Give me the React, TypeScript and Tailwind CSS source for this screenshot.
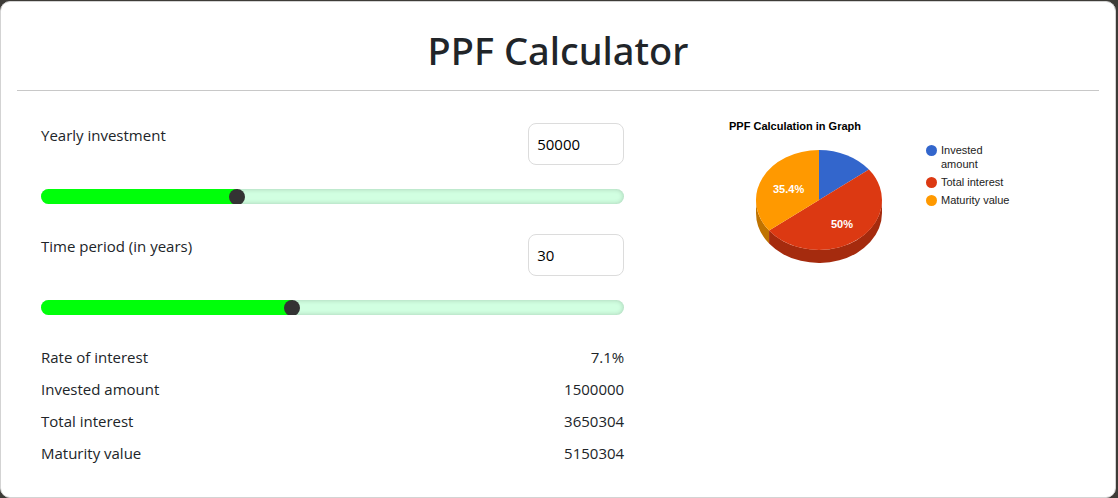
import { useState } from 'react';

interface SliderFieldProps {
  id: string;
  label: string;
  value: number;
  min: number;
  max: number;
  onChange: (value: number) => void;
}

const SliderField = ({ id, label, value, min, max, onChange }: SliderFieldProps) => {
  return (
    <div className="mb-[30px]">
      <div className="mb-6 flex items-start justify-between">
        <label htmlFor={id}>{label}</label>
        <input
          id={id}
          type="text"
          inputMode="numeric"
          className="h-[42px] w-24 rounded-lg border border-[#dcdcdc] bg-white px-2 text-black outline-none"
          value={value}
          onChange={(e) => onChange(Number(e.target.value) || 0)}
        />
      </div>
      <input
        type="range"
        aria-label={label}
        min={min}
        max={max}
        value={value}
        onChange={(e) => onChange(Number(e.target.value))}
        className="block h-[15px] w-full cursor-pointer appearance-none overflow-hidden rounded-full bg-[#d1ffe1] shadow-[inset_0_0_5px_rgba(0,0,0,0.2)] outline-none [&::-webkit-slider-thumb]:size-4 [&::-webkit-slider-thumb]:appearance-none [&::-webkit-slider-thumb]:rounded-full [&::-webkit-slider-thumb]:bg-[#333] [&::-webkit-slider-thumb]:shadow-[-1007px_0_0_1000px_#00ff0a]"
      />
    </div>
  );
};

interface LegendItem {
  lines: string[];
  y: number;
  color: string;
}

const legend: LegendItem[] = [
  { lines: ['Invested', 'amount'], y: 43, color: '#3366cc' },
  { lines: ['Total interest'], y: 75, color: '#dc3912' },
  { lines: ['Maturity value'], y: 93, color: '#ff9900' },
];

const CX = 147;
const CY = 93;
const RX = 63;
const RY = 50;
const DEPTH = 13;

const pointAt = (fraction: number) => {
  const angle = fraction * 2 * Math.PI;
  return { x: CX + RX * Math.sin(angle), y: CY - RY * Math.cos(angle) };
};

// values are in the order blue, red, orange
const PieChart = ({ values }: { values: [number, number, number] }) => {
  const [blue, red, orange] = values;
  const total = blue + red + orange || 1;
  const p0 = pointAt(0);
  const p1 = pointAt(blue / total);
  const p2 = pointAt((blue + red) / total);
  const percent = (n: number) => `${Number(((n / total) * 100).toFixed(1))}%`;

  return (
    <svg viewBox="0 0 400 200" width="400" height="200" className="max-w-full font-['Liberation_Sans',Arial,sans-serif] text-[11px]">
      <text x="57" y="23" className="fill-black font-bold">
        PPF Calculation in Graph
      </text>
      {/* side wall */}
      <path
        d={`M${CX - RX} ${CY}A${RX} ${RY} 0 0 0 ${p2.x} ${p2.y}v${DEPTH}A${RX} ${RY} 0 0 1 ${CX - RX} ${CY + DEPTH}Z`}
        fill="#bf7300"
      />
      <path
        d={`M${p2.x} ${p2.y}A${RX} ${RY} 0 0 0 ${CX + RX} ${CY}v${DEPTH}A${RX} ${RY} 0 0 1 ${p2.x} ${p2.y + DEPTH}Z`}
        fill="#a52b0e"
      />
      {/* top face */}
      <path d={`M${CX} ${CY}L${p0.x} ${p0.y}A${RX} ${RY} 0 0 1 ${p1.x} ${p1.y}Z`} fill="#3366cc" />
      <path d={`M${CX} ${CY}L${p1.x} ${p1.y}A${RX} ${RY} 0 0 1 ${p2.x} ${p2.y}Z`} fill="#dc3912" />
      <path d={`M${CX} ${CY}L${p2.x} ${p2.y}A${RX} ${RY} 0 0 1 ${p0.x} ${p0.y}Z`} fill="#ff9900" />
      <text x="101" y="86" className="fill-white font-bold">
        {percent(orange)}
      </text>
      <text x="159" y="121" className="fill-white font-bold">
        {percent(red)}
      </text>
      {legend.map(({ lines, y, color }) => (
        <g key={color}>
          <circle cx="259.5" cy={y + 0.5} r="5.5" fill={color} />
          {lines.map((line, i) => (
            <text key={line} x="269" y={y + 4 + i * 14} className="fill-[#222]">
              {line}
            </text>
          ))}
        </g>
      ))}
    </svg>
  );
};

const RATE = 7.1;

const App = () => {
  const [yearly, setYearly] = useState(50000);
  const [years, setYears] = useState(30);

  const r = RATE / 100;
  const invested = yearly * years;
  const maturity = Math.round(yearly * (((1 + r) ** years - 1) / r) * (1 + r));
  const interest = maturity - invested;

  const results = [
    { label: 'Rate of interest', value: `${RATE}%` },
    { label: 'Invested amount', value: invested },
    { label: 'Total interest', value: interest },
    { label: 'Maturity value', value: maturity },
  ];

  return (
    <div className="min-h-screen bg-[#3d3b37] pt-px pr-0.5 font-['Open_Sans','Noto_Sans',sans-serif] text-[15px] leading-6 text-[#212529]">
      <main className="rounded-[10px] border border-[#d3d3d3] bg-white p-4">
        <h1 className="pt-2 pb-4 text-center font-['Noto_Sans','Open_Sans',sans-serif] text-[38px] leading-12 font-medium">PPF Calculator</h1>
        <hr className="border-[#c8c8c8]" />
        <div className="grid grid-cols-12 pt-4">
          <section className="col-span-7 px-6 pt-4">
            <SliderField id="yearly" label="Yearly investment" value={yearly} min={500} max={150000} onChange={setYearly} />
            <SliderField id="years" label="Time period (in years)" value={years} min={15} max={50} onChange={setYears} />
            <dl className="mb-4 flex flex-col gap-2">
              {results.map(({ label, value }) => (
                <div key={label} className="flex justify-between">
                  <dt>{label}</dt>
                  <dd>{value}</dd>
                </div>
              ))}
            </dl>
          </section>
          <section className="col-span-5 px-6">
            <PieChart values={[invested, maturity, interest]} />
          </section>
        </div>
      </main>
    </div>
  );
};

export default App;
